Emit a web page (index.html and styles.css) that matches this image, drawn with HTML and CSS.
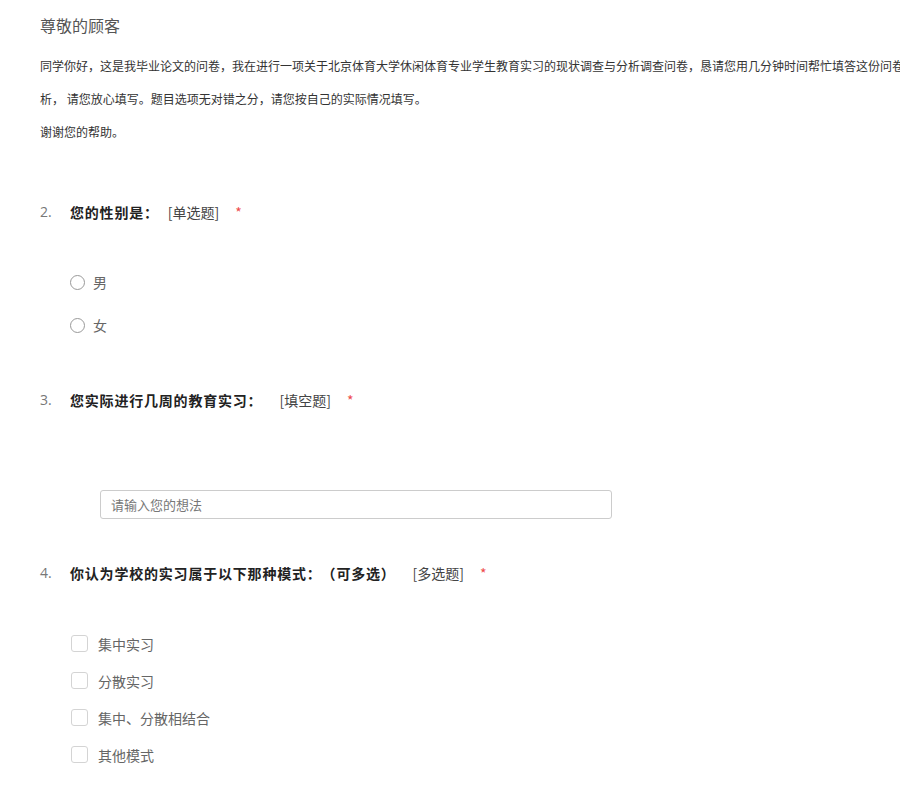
FILE: index.html
```html
<!DOCTYPE html>
<html lang="zh-CN">
<head>
<meta charset="utf-8">
<title>问卷</title>
<link rel="stylesheet" href="styles.css">
</head>
<body>
<div class="page">
  <header class="intro">
    <h1 class="intro-title">尊敬的顾客</h1>
    <div class="intro-text">
      <p class="intro-line">同学你好，这是我毕业论文的问卷，我在进行一项关于北京体育大学休闲体育专业学生教育实习的现状调查与分析调查问卷，恳请您用几分钟时间帮忙填答这份问卷，所得数据仅用于学术分</p>
      <p class="intro-line">析， 请您放心填写。题目选项无对错之分，请您按自己的实际情况填写。</p>
      <p class="intro-line">谢谢您的帮助。</p>
    </div>
  </header>

  <section class="question q-radio">
    <div class="q-head">
      <span class="q-num">2.</span>
      <span class="q-title">您的性别是：</span>
      <span class="q-tag tag-2">[单选题]</span>
      <span class="q-req">*</span>
    </div>
    <div class="options radios">
      <label class="opt radio-opt"><span class="radio"></span><span class="opt-label">男</span></label>
      <label class="opt radio-opt"><span class="radio"></span><span class="opt-label">女</span></label>
    </div>
  </section>

  <section class="question q-fill">
    <div class="q-head">
      <span class="q-num">3.</span>
      <span class="q-title">您实际进行几周的教育实习：</span>
      <span class="q-tag tag-3">[填空题]</span>
      <span class="q-req">*</span>
    </div>
    <div class="fill-wrap">
      <input class="fill-input" type="text" placeholder="请输入您的想法">
    </div>
  </section>

  <section class="question q-check">
    <div class="q-head">
      <span class="q-num">4.</span>
      <span class="q-title">你认为学校的实习属于以下那种模式：（可多选）</span>
      <span class="q-tag tag-4">[多选题]</span>
      <span class="q-req">*</span>
    </div>
    <div class="options checks">
      <label class="opt check-opt"><span class="checkbox"></span><span class="opt-label">集中实习</span></label>
      <label class="opt check-opt"><span class="checkbox"></span><span class="opt-label">分散实习</span></label>
      <label class="opt check-opt"><span class="checkbox"></span><span class="opt-label">集中、分散相结合</span></label>
      <label class="opt check-opt"><span class="checkbox"></span><span class="opt-label">其他模式</span></label>
    </div>
  </section>
</div>
</body>
</html>
```
FILE: styles.css
```css
html, body {
  margin: 0;
  padding: 0;
  background: #fff;
  overflow-x: hidden;
}
body {
  font-family: "Noto Sans CJK SC", "Noto Sans", sans-serif;
  color: #333;
  text-spacing-trim: space-all;
}
.page {
  padding: 15px 0 0 40px;
}
.intro-title {
  margin: 0 0 14px;
  font-size: 16px;
  font-weight: normal;
  line-height: 20px;
  color: #555;
}
.intro-text {
  font-size: 12px;
  color: #333;
}
.intro-line {
  margin: 0;
  line-height: 33px;
  white-space: nowrap;
}
.question {
  margin-top: 54px;
}
.q-fill, .q-check {
  margin-top: 43.5px;
}
.q-head {
  display: flex;
  align-items: center;
  height: 20px;
  line-height: 20px;
}
.q-num {
  width: 30px;
  font-family: "Open Sans", "Liberation Sans", sans-serif;
  font-size: 14px;
  color: #777;
}
.q-title {
  font-size: 14px;
  font-weight: bold;
  color: #222;
  letter-spacing: 0.8px;
}
.q-tag {
  font-size: 14px;
  color: #444;
}
.tag-2 {
  margin-left: 9px;
}
.tag-3 {
  margin-left: 17px;
}
.tag-4 {
  margin-left: 17px;
}
.q-req {
  margin-left: 16px;
  font-size: 14px;
  color: #ee4b4b;
}
.options {
  display: flex;
  flex-direction: column;
  padding-left: 30px;
}
.radios {
  margin-top: 38.5px;
}
.checks {
  margin-top: 42.5px;
}
.opt {
  display: flex;
  align-items: center;
  font-size: 14px;
  color: #666;
}
.radio-opt {
  height: 43px;
}
.check-opt {
  height: 37px;
}
.radio {
  box-sizing: border-box;
  width: 15px;
  height: 15px;
  border: 1px solid #999;
  border-radius: 50%;
  margin-right: 8px;
}
.checkbox {
  box-sizing: border-box;
  width: 17px;
  height: 17px;
  border: 1px solid #d4d4d4;
  border-radius: 3px;
  margin-left: 1px;
  margin-right: 10px;
}
.fill-wrap {
  margin-top: 80px;
  padding-left: 60px;
}
.fill-input {
  box-sizing: border-box;
  display: block;
  width: 512px;
  height: 29px;
  margin: 0;
  padding: 0 10px;
  border: 1px solid #ccc;
  border-radius: 3px;
  font-family: "Noto Sans CJK SC", sans-serif;
  font-size: 13px;
  color: #333;
  outline: none;
}
.fill-input::placeholder {
  color: #777;
}
```
